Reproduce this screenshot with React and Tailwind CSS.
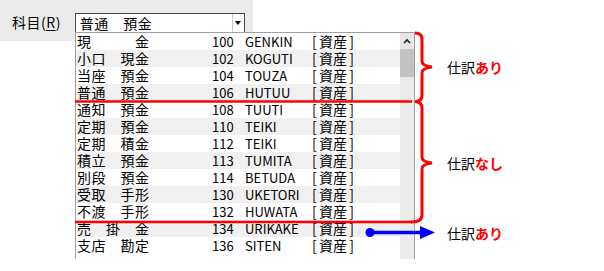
import React from 'react';

const rows = [
   ['現　　　金', '100', 'GENKIN'],
   ['小口　現金', '102', 'KOGUTI'],
   ['当座　預金', '104', 'TOUZA'],
   ['普通　預金', '106', 'HUTUU'],
   ['通知　預金', '108', 'TUUTI'],
   ['定期　預金', '110', 'TEIKI'],
   ['定期　積金', '112', 'TEIKI'],
   ['積立　預金', '113', 'TUMITA'],
   ['別段　預金', '114', 'BETUDA'],
   ['受取　手形', '130', 'UKETORI'],
   ['不渡　手形', '132', 'HUWATA'],
   ['売　掛　金', '134', 'URIKAKE'],
   ['支店　勘定', '136', 'SITEN'],
];

const font = { fontFamily: '"Noto Sans CJK JP", "Noto Sans", sans-serif' };

const App = () => {
   return (
      <div
         className="relative w-[604px] h-[271px] bg-white overflow-hidden text-black"
         style={font}
      >
         {/* Form area */}
         <div className="w-[253px] h-[41px] bg-[#ebebeb] flex items-start pt-[13px] pl-[12px] gap-[14px]">
            <span className="text-[14px] leading-[18px] tracking-[0.5px]">
               科目(<span className="underline underline-offset-2">R</span>)
            </span>
            <div className="w-[170px] h-[20px] bg-white border border-[#4a4a4a] flex items-center">
               <span className="flex-1 pl-[4px] text-[14px] leading-[18px] tracking-[0.5px]">
                  普通　預金
               </span>
               <div className="w-[12px] h-[18px] border-l border-[#c8c8c8] flex items-center justify-center">
                  <div className="w-0 h-0 border-l-[3px] border-r-[3px] border-t-[4px] border-l-transparent border-r-transparent border-t-black" />
               </div>
            </div>
         </div>

         {/* Dropdown list */}
         <div className="absolute left-[75px] top-[32px] w-[340px] h-[227px] bg-white border-l border-t border-r border-[#a0a0a0] flex">
            <div className="flex-1 flex flex-col">
               {rows.map(([name, no, code], i) => (
                  <div
                     key={i}
                     className={`h-[17px] grid grid-cols-[135px_33px_67px_auto] pl-[1px] items-center ${
                        i % 2 === 1 ? 'bg-[#f0f0f0]' : 'bg-white'
                     }`}
                  >
                     <span className="text-[14px] leading-[17px] tracking-[0.5px] whitespace-pre">
                        {name}
                     </span>
                     <span className="text-[13px] leading-[17px]">{no}</span>
                     <span className="text-[13px] leading-[17px]">{code}</span>
                     <span className="text-[14px] leading-[17px] flex">
                        <span className="w-[7px]">[</span>
                        <span>資産</span>
                        <span className="w-[7px] text-right">]</span>
                     </span>
                  </div>
               ))}
            </div>
            {/* Scrollbar */}
            <div className="w-[14px] flex flex-col bg-[#ebebeb]">
               <div className="h-[16px] bg-[#e6e6e6] flex items-center justify-center">
                  <svg width="8" height="6" viewBox="0 0 8 6">
                     <path d="M1 5 L4 2 L7 5" fill="none" stroke="#222" strokeWidth="1.6" />
                  </svg>
               </div>
               <div className="h-[28px] bg-[#c2c2c2]" />
            </div>
         </div>

         {/* Annotations */}
         <svg
            className="absolute inset-0 pointer-events-none"
            width="604"
            height="271"
            viewBox="0 0 604 271"
         >
            <path d="M75 101.5 H412" stroke="#ff0000" strokeWidth="2.5" />
            <path d="M75 222 H412" stroke="#ff0000" strokeWidth="2.5" />
            <path
               d="M415 33 Q422 33 422 39 V61 Q422 66 432 67 Q422 68 422 73 V95 Q422 101.5 415 101.5"
               fill="none"
               stroke="#ff0000"
               strokeWidth="3"
            />
            <path
               d="M415 101.5 Q422 102 422 108 V157 Q422 162 432 163 Q422 164 422 169 V215 Q422 222 411 222"
               fill="none"
               stroke="#ff0000"
               strokeWidth="3"
            />
            <circle cx="370" cy="232.5" r="4.5" fill="#0000ff" />
            <path d="M370 232.5 H422" stroke="#0000ff" strokeWidth="3.5" />
            <polygon points="420,226 435,232.5 420,239" fill="#0000ff" />
         </svg>

         <div className="absolute left-[447px] top-[58px] text-[14px] leading-[18px]">
            仕訳<span className="text-[#ff0000] font-bold">あり</span>
         </div>
         <div className="absolute left-[447px] top-[154px] text-[14px] leading-[18px]">
            仕訳<span className="text-[#ff0000] font-bold">なし</span>
         </div>
         <div className="absolute left-[447px] top-[224px] text-[14px] leading-[18px]">
            仕訳<span className="text-[#ff0000] font-bold">あり</span>
         </div>
      </div>
   );
};

export default App;
